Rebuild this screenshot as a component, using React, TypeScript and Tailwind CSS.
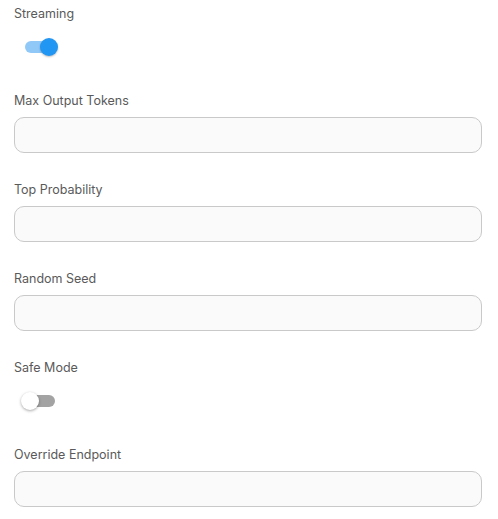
import React from 'react';

/**
 * Settings form: toggles and text fields stacked in one column.
 */

type ToggleProps = { checked: boolean };

const Toggle: React.FC<ToggleProps> = ({ checked }) => (
  <div className="mt-[5px] h-[36px] flex items-center pl-[7px]">
    <div className="relative w-[37px] h-[18px]">
      <div
        className={
          checked
            ? 'absolute left-[4px] top-[3px] w-[30px] h-[12px] rounded-full bg-[#90c8f8]'
            : 'absolute left-[4px] top-[3px] w-[30px] h-[12px] rounded-full bg-[#a3a3a3]'
        }
      />
      <div
        className={
          checked
            ? 'absolute left-[19px] top-0 w-[18px] h-[18px] rounded-full bg-[#2196f3] shadow-[0_1px_2px_rgba(0,0,0,0.25)]'
            : 'absolute left-0 top-0 w-[18px] h-[18px] rounded-full bg-white shadow-[0_1px_3px_rgba(0,0,0,0.35)]'
        }
      />
    </div>
  </div>
);

const Field: React.FC<{ label: string }> = ({ label }) => (
  <div>
    <label className="block text-[12.5px] leading-[20px] text-[#5a5a5a]">{label}</label>
    <input
      type="text"
      className="mt-[6px] block w-full h-[36px] rounded-[10px] border border-[#c9c9c9] bg-[#fafafa] px-3 text-[13px] outline-none"
    />
  </div>
);

const ToggleField: React.FC<{ label: string; checked: boolean }> = ({ label, checked }) => (
  <div>
    <div className="text-[12.5px] leading-[20px] text-[#5a5a5a]">{label}</div>
    <Toggle checked={checked} />
  </div>
);

const App: React.FC = () => {
  return (
    <div
      className="w-[498px] h-[519px] bg-white pl-[14px] pr-[16px] pt-[4px] flex flex-col gap-[27px]"
      style={{ fontFamily: 'Inter, "Noto Sans", sans-serif' }}
    >
      <ToggleField label="Streaming" checked={true} />
      <div className="-mt-[1px]">
        <Field label="Max Output Tokens" />
      </div>
      <Field label="Top Probability" />
      <Field label="Random Seed" />
      <ToggleField label="Safe Mode" checked={false} />
      <div className="-mt-[1px]">
        <Field label="Override Endpoint" />
      </div>
    </div>
  );
};

export default App;
